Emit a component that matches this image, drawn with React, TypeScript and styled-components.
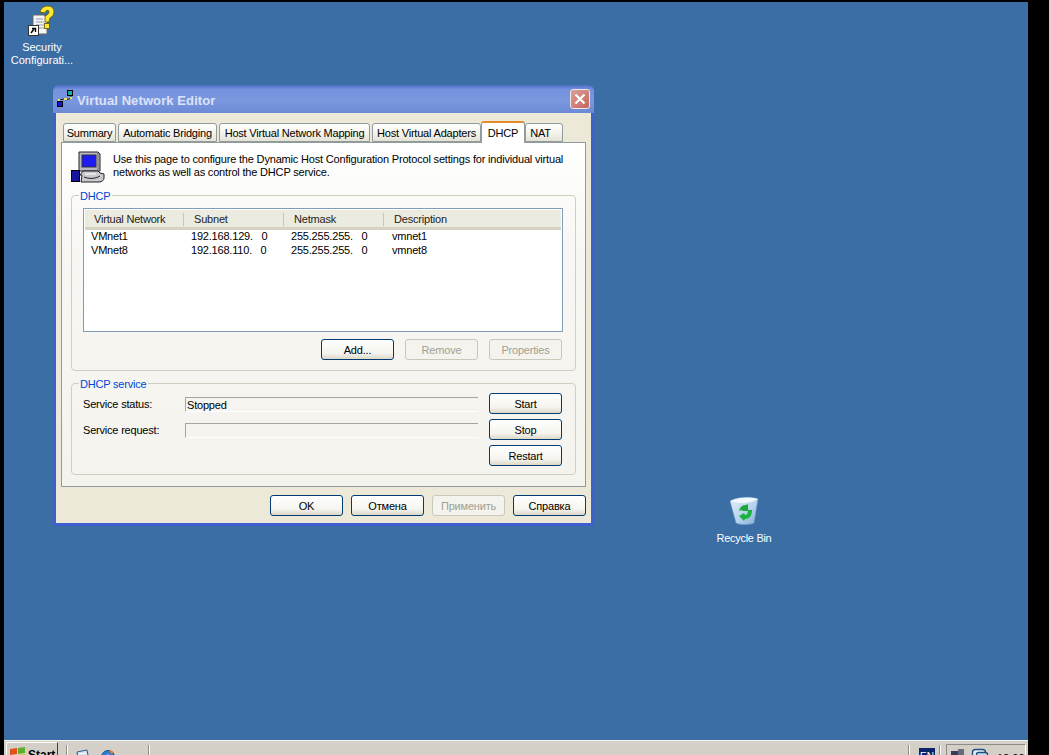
import React from "react";
import styled, { createGlobalStyle } from "styled-components";

const GlobalStyle = createGlobalStyle`
  html, body {
    margin: 0;
    padding: 0;
    background: #000;
    overflow: hidden;
  }
`;

const Screen = styled.div`
  width: 1049px;
  height: 755px;
  padding: 2px 21px 0 4px;
  box-sizing: border-box;
  background: #000;
  display: flex;
  flex-direction: column;
  overflow: hidden;
  font-family: "Liberation Sans", Arial, sans-serif;
  font-size: 11px;
  letter-spacing: -0.2px;
  color: #000;
`;

const Desktop = styled.div`
  position: relative;
  flex: 1;
  background: #3a6ea5;
`;

const DesktopIcon = styled.div<{ $left: number; $top: number }>`
  position: absolute;
  left: ${(p) => p.$left}px;
  top: ${(p) => p.$top}px;
  width: 76px;
  display: flex;
  flex-direction: column;
  align-items: center;
  color: #fff;
  line-height: 13px;
  text-align: center;
`;

const IconLabel = styled.div<{ $gap: number; $spacing: number }>`
  margin-top: ${(p) => p.$gap}px;
  letter-spacing: ${(p) => p.$spacing}px;
`;

const Window = styled.div`
  position: absolute;
  left: 49px;
  top: 83px;
  width: 541px;
  height: 441px;
  box-sizing: border-box;
  background: #3f5fd0;
  border-radius: 6px 6px 0 0;
  padding: 0 3px 3px;
  display: flex;
  flex-direction: column;
`;

const TitleBar = styled.div`
  height: 28px;
  flex-shrink: 0;
  margin: 0 -3px;
  padding: 0 4px;
  border-radius: 6px 6px 0 0;
  background: linear-gradient(180deg, #4a6fc8 0%, #7491dc 16%, #7b97de 55%, #6c8ad6 100%);
  display: flex;
  align-items: center;
  gap: 3px;
`;

const TitleText = styled.div`
  flex: 1;
  padding-top: 2px;
  color: #dbe3f9;
  font-size: 13px;
  font-weight: bold;
  letter-spacing: 0.1px;
`;

const CloseButton = styled.div`
  width: 20px;
  height: 20px;
  box-sizing: border-box;
  border: 1px solid #f0e6e6;
  border-radius: 3px;
  background: linear-gradient(135deg, #d9a09c 0%, #cf7d74 60%, #c4665c 100%);
  display: flex;
  align-items: center;
  justify-content: center;
`;

const WindowBody = styled.div`
  flex: 1;
  background: #ece9d8;
  padding: 8px 5px 0;
  display: flex;
  flex-direction: column;
`;

const TabRow = styled.div`
  height: 21px;
  padding-left: 2px;
  display: flex;
  align-items: flex-end;
  position: relative;
  z-index: 1;
  flex-shrink: 0;
`;

const Tab = styled.div<{ $w: number; $active?: boolean; $inset?: number }>`
  width: ${(p) => p.$w}px;
  height: ${(p) => (p.$active ? 22 : 19)}px;
  margin-right: ${(p) => (p.$active ? 0 : 2)}px;
  margin-bottom: ${(p) => (p.$active ? -1 : 0)}px;
  margin-left: ${(p) => (p.$active ? -2 : 0)}px;
  box-sizing: border-box;
  border: 1px solid #919b9c;
  border-bottom: ${(p) => (p.$active ? "none" : "1px solid #919b9c")};
  border-top: ${(p) => (p.$active ? "2px solid #e68b2c" : "1px solid #919b9c")};
  border-radius: 3px 3px 0 0;
  background: ${(p) => (p.$active ? "#fff" : "linear-gradient(180deg, #fff 0%, #f3f2ea 60%, #e4e2d4 100%)")};
  display: flex;
  align-items: center;
  justify-content: center;
  padding-top: ${(p) => (p.$active ? 0 : 1)}px;
  padding-right: ${(p) => p.$inset ?? 0}px;
`;

const TabPage = styled.div`
  height: 345px;
  box-sizing: border-box;
  border: 1px solid #919b9c;
  background: linear-gradient(180deg, #fff 0%, #f8f7f3 30%, #f4f3ee 100%);
  padding: 8px 9px 0;
  flex-shrink: 0;
`;

const IntroRow = styled.div`
  display: flex;
  align-items: flex-start;
  height: 38px;
  gap: 6px;
`;

const IntroText = styled.div`
  line-height: 13px;
  padding-top: 2px;
  width: 460px;
  letter-spacing: -0.18px;
`;

const Group = styled.fieldset`
  margin: 0 0 6px;
  padding: 6px 12px 10px 11px;
  border: 1px solid #d0d0bf;
  border-radius: 4px;
  min-width: 0;
`;

const ServiceGroup = styled(Group)`
  padding-bottom: 8px;
`;

const GroupLegend = styled.legend`
  color: #0046d5;
  height: 13px;
  line-height: 15px;
  padding: 0 2px 0 1px;
  margin-left: -4px;
`;

const ListBox = styled.div`
  height: 124px;
  box-sizing: border-box;
  border: 1px solid #7f9db9;
  background: #fff;
`;

const ListHeader = styled.div`
  height: 20px;
  margin: 1px 1px 0;
  padding-top: 2px;
  box-sizing: border-box;
  background: #ecebdf;
  border-bottom: 3px solid #d6d3c3;
  display: grid;
  grid-template-columns: 98px 100px 100px 1fr;
  align-items: center;
`;

const HeaderCell = styled.div`
  padding-left: 9px;
  height: 13px;
  line-height: 13px;
  color: #222;
  & + & {
    border-left: 1px solid #cbc7b8;
    padding-left: 10px;
  }
`;

const ListRows = styled.div`
  margin-top: -1px;
`;

const ListRow = styled.div`
  height: 14px;
  line-height: 14px;
  display: grid;
  grid-template-columns: 100px 100px 101px 1fr;
  padding-left: 7px;
`;

const Cell = styled.div`
  white-space: pre;
`;

const ButtonRow = styled.div<{ $gap: number }>`
  display: flex;
  justify-content: flex-end;
  gap: ${(p) => p.$gap}px;
`;

const ListButtons = styled(ButtonRow)`
  margin-top: 7px;
  padding-right: 1px;
`;

const PushButton = styled.div<{ $disabled?: boolean }>`
  width: 73px;
  height: 21px;
  box-sizing: border-box;
  border: 1px solid ${(p) => (p.$disabled ? "#cac8bb" : "#003c74")};
  border-radius: 3px;
  background: ${(p) => (p.$disabled ? "#f4f3ee" : "linear-gradient(180deg, #fff 0%, #f5f4ee 70%, #dcd8c8 100%)")};
  color: ${(p) => (p.$disabled ? "#a1a192" : "#000")};
  display: flex;
  align-items: center;
  justify-content: center;
`;

const ServiceGrid = styled.div`
  display: grid;
  grid-template-columns: 91px 293px 73px;
  grid-auto-rows: 21px;
  column-gap: 11px;
  row-gap: 5px;
  align-items: center;
  margin-top: -3px;
`;

const ServiceLabel = styled.div`
  line-height: 13px;
  margin-top: 2px;
`;

const ServiceField = styled.div`
  height: 15px;
  margin-top: 2px;
  box-sizing: border-box;
  border-top: 1px solid #a7a69c;
  border-left: 1px solid #a7a69c;
  border-bottom: 1px solid #fff;
  line-height: 14px;
  padding-left: 1px;
`;

const RestartButton = styled(PushButton)`
  grid-column: 3;
`;

const Footer = styled(ButtonRow)`
  margin-top: 8px;
`;

const Taskbar = styled.div`
  height: 15px;
  flex-shrink: 0;
  box-sizing: border-box;
  background: #d4d0c8;
  border-top: 1px solid #f6f5f1;
  display: flex;
  overflow: hidden;
  padding-top: 1px;
  letter-spacing: 0;
`;

const StartButton = styled.div`
  width: 52px;
  height: 24px;
  margin-left: 2px;
  box-sizing: border-box;
  background: #d4d0c8;
  border-top: 1px solid #fff;
  border-left: 1px solid #fff;
  border-right: 1px solid #404040;
  padding: 4px 0 0 2px;
  display: flex;
  align-items: flex-start;
  gap: 2px;
  font-size: 12px;
  font-weight: bold;
  line-height: 17px;
`;

const Separator = styled.div<{ $left: number }>`
  width: 1px;
  height: 24px;
  margin: 3px 0 0 ${(p) => p.$left}px;
  background: #8f8d86;
  border-right: 1px solid #fff;
  flex-shrink: 0;
`;

const QuickIcon = styled.div<{ $left: number }>`
  margin-left: ${(p) => p.$left}px;
  padding-top: 7px;
  flex-shrink: 0;
`;

const TaskSpace = styled.div`
  flex: 1;
`;

const LangBox = styled.div`
  width: 16px;
  height: 24px;
  margin: 6px 4px 0 9px;
  background: #0a246a;
  color: #fff;
  font-size: 10px;
  text-align: center;
  line-height: 18px;
`;

const Tray = styled.div`
  width: 80px;
  height: 24px;
  margin: 2px 2px 0 5px;
  box-sizing: border-box;
  border-top: 1px solid #8f8d86;
  border-left: 1px solid #8f8d86;
  border-right: 1px solid #fff;
  padding: 3px 0 0 3px;
  display: flex;
  gap: 4px;
  line-height: 14px;
`;

const TrayClock = styled.div`
  margin-left: 3px;
  padding-top: 3px;
`;

const SecurityIcon = () => (
  <svg width="30" height="32" viewBox="0 0 30 32">
    <path d="M6 10h11l3 3v16H6z" fill="#f4f4f4" stroke="#6b6b6b" />
    <path d="M9 14h7M9 17h8M9 20h8M9 23h8" stroke="#9a9ab0" />
    <path
      d="M13 7c1-4 4-6 8-6s6 3 6 6-2 5-4 6l-1 4h-4v-6c2-1 4-2 4-4s-2-2-3-1l-1 2z"
      fill="#ffe92e"
      stroke="#5a5200"
      strokeWidth="0.8"
    />
    <rect x="17.5" y="18.5" width="5" height="5" fill="#ffe92e" stroke="#5a5200" strokeWidth="0.8" />
    <rect x="1.5" y="20.5" width="10" height="10" fill="#fff" stroke="#333" />
    <path d="M4 28l3-4M5 23.5h3.5V27" stroke="#000" strokeWidth="1.4" fill="none" />
  </svg>
);

const RecycleIcon = () => (
  <svg width="30" height="30" viewBox="0 0 30 30">
    <defs>
      <linearGradient id="binFill" x1="0" y1="0" x2="1" y2="1">
        <stop offset="0" stopColor="#e6f1fb" />
        <stop offset="0.6" stopColor="#b3d0ec" />
        <stop offset="1" stopColor="#7fa9d4" />
      </linearGradient>
    </defs>
    <path d="M1 5c6-4 22-5 28-2l-4 24c-4 2-14 2-18 0z" fill="url(#binFill)" stroke="#6f9aca" strokeWidth="0.6" />
    <path d="M2 5c6 3 20 3 27-2-6-2-21-2-27 2z" fill="#f1f7fd" />
    <path d="M10 15c1-4 3-6 7-6l2-1v7h-5c0-1-3-1-4 0z" fill="#1fa83a" />
    <path d="M23 14c0 5-2 9-7 9l-1 2-5-5 5-3 1 2c2 0 3-2 3-5z" fill="#17b33c" />
  </svg>
);

const NetworkIcon = () => (
  <svg width="17" height="18" viewBox="0 0 17 18">
    <path d="M2 10l5-1 2 1 5-2V5" stroke="#222" strokeWidth="1" fill="none" />
    <path d="M3 11v2" stroke="#222" />
    <rect x="0.5" y="11.5" width="5" height="5" fill="#1414d0" stroke="#000" />
    <rect x="10.5" y="0.5" width="5" height="5" fill="#1fa6a6" stroke="#000" />
    <rect x="1" y="9" width="2" height="2" fill="#e8e860" />
    <rect x="7" y="8" width="3" height="2" fill="#e8e860" />
    <rect x="13" y="7" width="2" height="2" fill="#e8e860" />
  </svg>
);

const ComputerIcon = () => (
  <svg width="36" height="32" viewBox="0 0 36 32">
    <path d="M8 1h19l2 2v17H9l-1-1z" fill="#b9b9c4" stroke="#222" />
    <rect x="11" y="4" width="14" height="12" fill="#1c1cf0" stroke="#333" />
    <path d="M27 2v17" stroke="#6a6a74" />
    <path d="M12 20l-3 4h2l-1 7h18c3 0 5-2 5-4v-4l-4-1-2-2z" fill="#c9c9d0" stroke="#222" />
    <path d="M13 26c5 2 11 2 16-1" stroke="#222" fill="none" />
    <path d="M14 23h11" stroke="#fff" />
    <rect x="0.5" y="19.5" width="8" height="11" fill="#16169c" stroke="#000" />
  </svg>
);

const CloseGlyph = () => (
  <svg width="12" height="12" viewBox="0 0 12 12">
    <path d="M1.5 1.5l9 9M10.5 1.5l-9 9" stroke="#fff" strokeWidth="2.2" />
  </svg>
);

const StartFlag = () => (
  <svg width="17" height="15" viewBox="0 0 17 15">
    <path d="M1 2l7-1v6l-7 1z" fill="#e4501c" />
    <path d="M9 1l7-1v6l-7 1z" fill="#5fae2e" />
    <path d="M1 9l7-1v6l-7-1z" fill="#2f6fd0" />
    <path d="M9 8l7-1v7H9z" fill="#f0c020" />
  </svg>
);

const DesktopQuickIcon = () => (
  <svg width="16" height="16" viewBox="0 0 16 16">
    <path d="M2 3l10-2 2 10-10 2z" fill="#cfe0f2" stroke="#2e5c94" />
    <path d="M4 5l7-1M5 8l7-1" stroke="#fff" />
    <circle cx="12" cy="12" r="3" fill="#d06030" />
  </svg>
);

const BrowserQuickIcon = () => (
  <svg width="16" height="16" viewBox="0 0 16 16">
    <circle cx="8" cy="8" r="6.5" fill="#2e7fd0" stroke="#14508c" />
    <circle cx="8" cy="8" r="2.5" fill="#dff0ff" />
    <path d="M9 1c2 0 4 1 5 3l-3 1z" fill="#e07a30" />
  </svg>
);

const TrayNetIcon = () => (
  <svg width="16" height="16" viewBox="0 0 16 16">
    <rect x="1" y="3" width="7" height="11" fill="#39395e" />
    <rect x="8" y="1" width="6" height="11" fill="#6a6a7a" />
    <rect x="9" y="9" width="5" height="6" fill="#e8c020" />
  </svg>
);

const TrayVmIcon = () => (
  <svg width="20" height="16" viewBox="0 0 20 16">
    <rect x="2.5" y="1.5" width="13" height="12" rx="3" fill="#e8eef5" stroke="#1f4f80" strokeWidth="1.4" />
    <rect x="6.5" y="4.5" width="11" height="10" rx="2" fill="#c8d8ea" stroke="#1f4f80" strokeWidth="1.4" />
  </svg>
);

const tabs = [
  { label: "Summary", w: 53 },
  { label: "Automatic Bridging", w: 99 },
  { label: "Host Virtual Network Mapping", w: 151 },
  { label: "Host Virtual Adapters", w: 109 },
  { label: "DHCP", w: 44, active: true },
  { label: "NAT", w: 38, inset: 7 },
];

const networks = [
  { name: "VMnet1", subnet: "192.168.129.   0", mask: "255.255.255.   0", desc: "vmnet1" },
  { name: "VMnet8", subnet: "192.168.110.   0", mask: "255.255.255.   0", desc: "vmnet8" },
];

const App = () => {
  return (
    <Screen>
      <GlobalStyle />
      <Desktop>
        <DesktopIcon $left={0} $top={3}>
          <SecurityIcon />
          <IconLabel $gap={4} $spacing={0}>
            Security
            <br />
            Configurati...
          </IconLabel>
        </DesktopIcon>
        <DesktopIcon $left={702} $top={494}>
          <RecycleIcon />
          <IconLabel $gap={6} $spacing={-0.3}>
            Recycle Bin
          </IconLabel>
        </DesktopIcon>

        <Window>
          <TitleBar>
            <NetworkIcon />
            <TitleText>Virtual Network Editor</TitleText>
            <CloseButton>
              <CloseGlyph />
            </CloseButton>
          </TitleBar>
          <WindowBody>
            <TabRow>
              {tabs.map((t) => (
                <Tab key={t.label} $w={t.w} $active={t.active} $inset={t.inset}>
                  {t.label}
                </Tab>
              ))}
            </TabRow>
            <TabPage>
              <IntroRow>
                <ComputerIcon />
                <IntroText>
                  Use this page to configure the Dynamic Host Configuration Protocol settings for individual virtual
                  networks as well as control the DHCP service.
                </IntroText>
              </IntroRow>
              <Group>
                <GroupLegend>DHCP</GroupLegend>
                <ListBox>
                  <ListHeader>
                    <HeaderCell>Virtual Network</HeaderCell>
                    <HeaderCell>Subnet</HeaderCell>
                    <HeaderCell>Netmask</HeaderCell>
                    <HeaderCell>Description</HeaderCell>
                  </ListHeader>
                  <ListRows>
                    {networks.map((n) => (
                      <ListRow key={n.name}>
                        <Cell>{n.name}</Cell>
                        <Cell>{n.subnet}</Cell>
                        <Cell>{n.mask}</Cell>
                        <Cell>{n.desc}</Cell>
                      </ListRow>
                    ))}
                  </ListRows>
                </ListBox>
                <ListButtons $gap={11}>
                  <PushButton>Add...</PushButton>
                  <PushButton $disabled>Remove</PushButton>
                  <PushButton $disabled>Properties</PushButton>
                </ListButtons>
              </Group>
              <ServiceGroup>
                <GroupLegend>DHCP service</GroupLegend>
                <ServiceGrid>
                  <ServiceLabel>Service status:</ServiceLabel>
                  <ServiceField>Stopped</ServiceField>
                  <PushButton>Start</PushButton>
                  <ServiceLabel>Service request:</ServiceLabel>
                  <ServiceField />
                  <PushButton>Stop</PushButton>
                  <RestartButton>Restart</RestartButton>
                </ServiceGrid>
              </ServiceGroup>
            </TabPage>
            <Footer $gap={8}>
              <PushButton>OK</PushButton>
              <PushButton>Отмена</PushButton>
              <PushButton $disabled>Применить</PushButton>
              <PushButton>Справка</PushButton>
            </Footer>
          </WindowBody>
        </Window>
      </Desktop>
      <Taskbar>
        <StartButton>
          <StartFlag />
          Start
        </StartButton>
        <Separator $left={8} />
        <QuickIcon $left={7}>
          <DesktopQuickIcon />
        </QuickIcon>
        <QuickIcon $left={9}>
          <BrowserQuickIcon />
        </QuickIcon>
        <Separator $left={32} />
        <TaskSpace />
        <Separator $left={0} />
        <LangBox>EN</LangBox>
        <Separator $left={0} />
        <Tray>
          <TrayNetIcon />
          <TrayVmIcon />
          <TrayClock>12:00</TrayClock>
        </Tray>
      </Taskbar>
    </Screen>
  );
};

export default App;
